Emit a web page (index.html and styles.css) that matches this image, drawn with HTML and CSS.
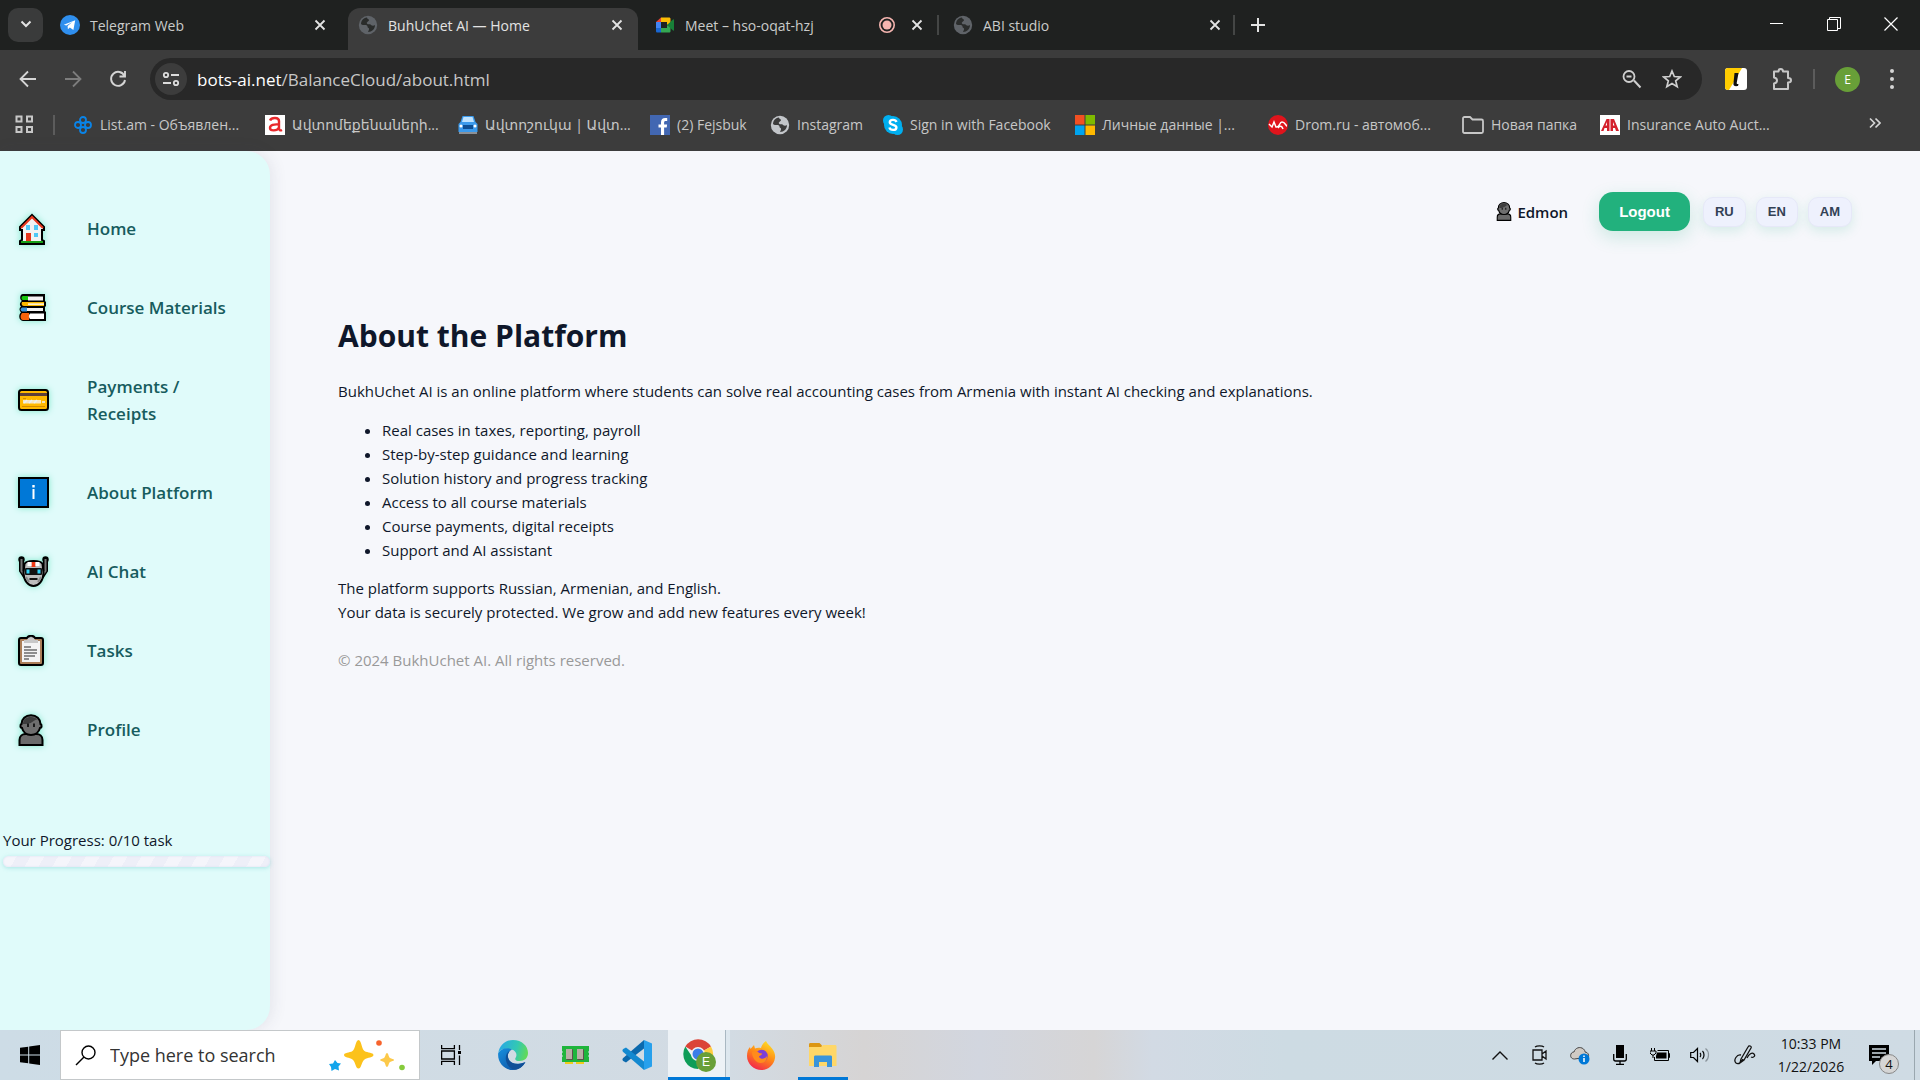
FILE: index.html
```html
<!DOCTYPE html>
<html lang="en">
<head>
  <meta charset="UTF-8">
  <title>BuhUchet AI — Home</title>
  <link rel="stylesheet" href="styles.css">
</head>
<body>
  <!-- shared icons -->
  <svg class="defs" aria-hidden="true">
    <symbol id="close" viewBox="0 0 12 12"><path d="M1.500 1.500l9 9M10.500 1.500l-9 9" stroke="currentColor" stroke-width="1.800" fill="none"/></symbol>
    <symbol id="globe" viewBox="0 0 20 20"><circle cx="10" cy="10" r="9.200" fill="currentColor"/><path d="M9 2.500C5 3 3 6 3 9c2 2 4 0 6 1.500 1 1 0 2 1.500 2.500 1 .5.5 2-.5 4 4 0 7-3 7-7-1 1-3 1-4 0-1-1.500-3 0-4-1.500C8 7 11 6.500 11 5c0-1-2-1-2-2.500z" fill="var(--cut)"/></symbol>
    <symbol id="person" viewBox="0 0 26 32">
      <path d="M1.500 31v-5c0-4 3-6 6-6h11c3 0 6 2 6 6v5z" fill="#6b6b6b" stroke="#000" stroke-width="2"/>
      <path d="M3.500 10c0-5 4-8.800 9.500-8.800S22.500 5 22.500 10c1.500.5 1.500 4-.5 4-1 4-4.500 7-9 7s-8-3-9-7c-2 0-2-3.500-.5-4z" fill="#6f6f6f" stroke="#000" stroke-width="2"/>
      <path d="M5 10C5 5.500 8 3 13 3c3 0 5 1 6.500 2.500C17 6 16.500 6 15 7.500 12 10 8 10 5 10z" fill="#3d3d3d"/>
      <path d="M10 9.500v3.500M16 9.500v3.500" stroke="#111" stroke-width="1.800"/>
    </symbol>
  </svg>

  <!-- tabs -->
  <div class="tab-strip">
    <button class="tab-search" aria-label="Search tabs"><svg width="12" height="12" viewBox="0 0 12 12"><path d="M1.500 3.500L6 8l4.500-4.500" fill="none" stroke="#e3e3e3" stroke-width="2"/></svg></button>
    <div class="tab">
      <svg width="20" height="20" viewBox="0 0 20 20"><circle cx="10" cy="10" r="10" fill="#2f8fee"/><path d="M3.800 9.800L15.200 5.200l-1.800 9.800-3.600-2.500-1.900 1.800-.3-3.200 4.700-4-6 3.500z" fill="#fff"/></svg>
      <span class="tab-title">Telegram Web</span>
      <button class="tab-close" aria-label="Close"><svg width="12" height="12"><use href="#close"/></svg></button>
    </div>
    <div class="tab active">
      <svg class="globe dim" width="20" height="20"><use href="#globe"/></svg>
      <span class="tab-title">BuhUchet AI — Home</span>
      <button class="tab-close" aria-label="Close"><svg width="12" height="12"><use href="#close"/></svg></button>
    </div>
    <div class="tab">
      <svg width="20" height="20" viewBox="0 0 20 20"><path d="M1 7l5-4.500V7z" fill="#ea4335"/><path d="M6 2.500h8c1 0 1.500.5 1.500 1.500v4L12 10V7H6z" fill="#fbbc04"/><path d="M1 7h5v6H1z" fill="#4285f4"/><path d="M1 13h5v4.500H2.500C1.500 17.500 1 17 1 16z" fill="#1967d2"/><path d="M6 13h6v-3l3.500 2v4c0 1-.5 1.500-1.500 1.500H6z" fill="#34a853"/><path d="M12 10l6-5.500c.5-.5 1-.2 1 .5v10c0 .7-.5 1-1 .5z" fill="#188038"/></svg>
      <span class="tab-title">Meet – hso-oqat-hzj</span>
      <svg class="rec" width="18" height="18" viewBox="0 0 18 18"><circle cx="9" cy="9" r="7.200" fill="none" stroke="#f5b5b0" stroke-width="1.600"/><circle cx="9" cy="9" r="4.500" fill="#f5b5b0"/></svg>
      <button class="tab-close" aria-label="Close"><svg width="12" height="12"><use href="#close"/></svg></button>
    </div>
    <div class="tab split">
      <svg class="globe dim" width="20" height="20"><use href="#globe"/></svg>
      <span class="tab-title">ABI studio</span>
      <button class="tab-close" aria-label="Close"><svg width="12" height="12"><use href="#close"/></svg></button>
    </div>
    <button class="new-tab" aria-label="New tab"><svg width="14" height="14" viewBox="0 0 14 14"><path d="M7 0v14M0 7h14" stroke="#e3e3e3" stroke-width="2"/></svg></button>
    <div class="window-buttons">
      <button aria-label="Minimize"><svg width="14" height="14" viewBox="0 0 14 14"><path d="M0 6.500h13" stroke="#fff"/></svg></button>
      <button aria-label="Restore"><svg width="14" height="14" viewBox="0 0 14 14"><path d="M.5 2.500h10v11H.5zM2.500 2.500v-2h11v11h-3" fill="none" stroke="#fff"/></svg></button>
      <button aria-label="Close window"><svg width="14" height="14" viewBox="0 0 14 14"><path d="M.5.5l13 13M13.500.5l-13 13" stroke="#fff" stroke-width="1.200"/></svg></button>
    </div>
  </div>

  <!-- address bar -->
  <div class="toolbar">
    <div class="nav-buttons">
      <button aria-label="Back"><svg width="18" height="18" viewBox="0 0 18 18"><path d="M17 9H2M9 1.500L1.500 9 9 16.500" fill="none" stroke="#d5d5d5" stroke-width="1.800"/></svg></button>
      <button aria-label="Forward"><svg width="18" height="18" viewBox="0 0 18 18"><path d="M1 9h15M9 1.500L16.500 9 9 16.500" fill="none" stroke="#7d7d7d" stroke-width="1.800"/></svg></button>
      <button aria-label="Reload"><svg width="18" height="18" viewBox="0 0 18 18"><path d="M15.500 6A7 7 0 1 0 16 10M16 1v5.500h-5.500" fill="none" stroke="#d5d5d5" stroke-width="1.900"/></svg></button>
    </div>
    <div class="address">
      <button class="site-info" aria-label="Site information"><svg width="18" height="16" viewBox="0 0 18 16"><g fill="none" stroke="#dcdcdc" stroke-width="1.800"><circle cx="4" cy="4" r="2.200"/><path d="M9 4h8M1 12h8"/><circle cx="14" cy="12" r="2.200"/></g></svg></button>
      <a class="url" href="#"><b>bots-ai.net</b>/BalanceCloud/about.html</a>
      <button aria-label="Zoom"><svg width="20" height="20" viewBox="0 0 20 20"><path d="M12 11.500l6.500 7M4.500 7.500h5" stroke="#cfcfcf" stroke-width="2"/><circle cx="7" cy="7.500" r="5.500" fill="none" stroke="#cfcfcf" stroke-width="1.800"/></svg></button>
      <button aria-label="Bookmark this page"><svg width="20" height="20" viewBox="0 0 20 20"><path d="M10 2l2.300 5.500 6 .5-4.600 3.900 1.500 5.900L10 14.600l-5.200 3.200 1.500-5.900L1.700 8l6-.5z" fill="none" stroke="#cfcfcf" stroke-width="1.700"/></svg></button>
    </div>
    <div class="extensions">
      <svg width="22" height="22" viewBox="0 0 22 22"><rect width="22" height="22" rx="3" fill="#fff"/><path d="M3 0h14L4 22H3a3 3 0 0 1-3-3V3a3 3 0 0 1 3-3z" fill="#fc0"/><path d="M9.500 5h4l-1.800 10c-.1 1 .5 1 1.800 1l-.5 2c-4 .5-5-.5-4.500-3z" fill="#111"/></svg>
      <svg width="22" height="24" viewBox="0 0 22 24"><path d="M3 4.500h4.500c0-3.500 4.500-3.500 4.500 0h5V11c4 0 4 4.500 0 4.500V22H3v-5.500c4-.5 4-5.500 0-6z" fill="none" stroke="#c7c7c7" stroke-width="2" stroke-linejoin="round"/></svg>
      <i class="divider"></i>
      <span class="avatar">E</span>
      <button aria-label="Menu"><svg width="4" height="20" viewBox="0 0 4 20" fill="#d5d5d5"><circle cx="2" cy="2" r="2"/><circle cx="2" cy="10" r="2"/><circle cx="2" cy="18" r="2"/></svg></button>
    </div>
  </div>

  <!-- bookmarks -->
  <nav class="bookmarks">
    <svg class="apps" width="19" height="19" viewBox="0 0 19 19"><path d="M1.500 1.500h5v5h-5zM12 1.500h5v5h-5zM1.500 12h5v5h-5zM12 12h5v5h-5z" fill="none" stroke="#c7c7c7" stroke-width="2"/></svg>
    <i class="divider"></i>
    <a href="#"><svg width="20" height="20" viewBox="0 0 20 20"><g fill="none" stroke="#0a84e8" stroke-width="1.800"><circle cx="10" cy="5" r="3"/><circle cx="10" cy="15" r="3"/><circle cx="5" cy="10" r="3"/><circle cx="15" cy="10" r="3"/></g></svg>List.am - Объявлен...</a>
    <a href="#"><svg width="20" height="20" viewBox="0 0 20 20"><path d="M0 0h20v20H0z" fill="#fff"/><path d="M5 5.500C6.500 2 14 2 14 6v7c0 2 1 3 3 2M14 9.500C9 9 5 10 5 13s7 3.500 9-.5" fill="none" stroke="#e8282b" stroke-width="2.400"/></svg>Ավտոմեքենաների...</a>
    <a href="#"><svg width="20" height="20" viewBox="0 0 20 20"><path d="M4.500 1h11l2 6 2 2v8H.5V9l2-2z" fill="#3b9aec"/><path d="M5.500 2h9L16 7H4z" fill="#bfe3ff"/><path d="M5 10h10v4H5z" fill="#0e4f94"/><circle cx="3" cy="11" r="1.500" fill="#fff"/><circle cx="17" cy="11" r="1.500" fill="#fff"/><path d="M1 17h18v2H1z" fill="#8b9096"/></svg>Ավտոշուկա | Ավտ...</a>
    <a href="#"><svg width="20" height="20" viewBox="0 0 20 20"><path d="M0 0h20v20H0z" fill="#4267b2"/><path d="M11 20v-7.500H8.500v-3H11V7.300C11 4.500 12.600 3 15.200 3l2 .1v2.800h-1.500c-1.200 0-1.600.6-1.600 1.500v2.100h3l-.4 3h-2.600V20z" fill="#fff"/></svg>(2) Fejsbuk</a>
    <a href="#"><svg class="globe" width="20" height="20"><use href="#globe"/></svg>Instagram</a>
    <a href="#"><svg width="20" height="20" viewBox="0 0 20 20"><circle cx="10" cy="10" r="9" fill="#00aff0"/><circle cx="5.500" cy="5.500" r="5.500" fill="#00aff0"/><circle cx="14.500" cy="14.500" r="5.500" fill="#00aff0"/><path d="M13.500 7C12.500 4 6.800 4.300 6.800 7.200c0 3.300 6.600 2 6.600 5.200 0 3.200-6 3.300-7 .1" fill="none" stroke="#fff" stroke-width="2.400"/></svg>Sign in with Facebook</a>
    <a href="#"><svg width="20" height="20" viewBox="0 0 20 20"><path d="M0 0h9.500v9.500H0z" fill="#f25022"/><path d="M10.500 0H20v9.500h-9.500z" fill="#7fba00"/><path d="M0 10.500h9.500V20H0z" fill="#00a4ef"/><path d="M10.500 10.500H20V20h-9.500z" fill="#ffb900"/></svg>Личные данные |...</a>
    <a href="#"><svg width="20" height="20" viewBox="0 0 20 20"><circle cx="10" cy="10" r="10" fill="#e0141c"/><path d="M1 9l3 3 2-5 2 5c4 1 3-5 6-5s4 4 5 4M10 13c2-3 4-2 5 1" fill="none" stroke="#fff" stroke-width="1.500"/></svg>Drom.ru - автомоб...</a>
    <a href="#"><svg width="22" height="18" viewBox="0 0 22 18"><path d="M1 2.500C1 1.500 1.500 1 2.500 1H8l2.500 2.500h9c1 0 1.500.5 1.500 1.500v10.500c0 1-.5 1.500-1.500 1.500h-17C1.500 17 1 16.500 1 15.500z" fill="none" stroke="#c7c7c7" stroke-width="1.800"/></svg>Новая папка</a>
    <a href="#"><svg width="20" height="20" viewBox="0 0 20 20"><path d="M0 0h20v20H0z" fill="#fff"/><path d="M1 16L6.500 4h3v12H7v-3H4.500L3.500 16zM10.500 4h3.500l5 12h-3l-1-3h-2v3h-2.500z" fill="#d4202c"/><path d="M5.500 10.500L7 7v3.500zM13 7l1.500 3.500H13z" fill="#fff"/></svg>Insurance Auto Auct...</a>
    <button class="more" aria-label="More bookmarks"><svg width="12" height="12" viewBox="0 0 12 12"><path d="M1 1.500L5.500 6 1 10.500M6.500 1.500L11 6l-4.500 4.500" fill="none" stroke="#d5d5d5" stroke-width="1.700"/></svg></button>
  </nav>

  <!-- site -->
  <div class="page">
    <aside class="sidebar">
      <nav class="menu">
        <a href="#"><span class="menu-icon"><svg width="28" height="32" viewBox="0 0 28 32"><path d="M14 2L26 14v3h-2v10l2 1v3H2v-3l2-1V17H2v-3z" fill="#f2f2f2" stroke="#000" stroke-width="2"/><path d="M3 28h22v2H3z" fill="#16a016"/><path d="M3 15L14 4l11 11" fill="none" stroke="#e8361c" stroke-width="2"/><path d="M8 20h5v8H8z" fill="#e8361c"/><path d="M8 12h4v5H8zM16 12h4v5h-4zM16 20h4v4h-4z" fill="#50c8f5"/></svg></span>Home</a>
        <a href="#"><span class="menu-icon"><svg width="29" height="29" viewBox="0 0 29 29"><path d="M5 1h22v7l1 1v4l-1 1v4l1 1v9H5c-4 0-5-6-2-8.500C1 17 1 15 3 13.500 1 12 2 9 4 8 1 6 2 1 5 1z" fill="#000"/><path d="M5 3h5v4H5C3 7 3 3 5 3z" fill="#16c60c"/><path d="M10 3.500h15v4H10z" fill="#f2f2f2"/><path d="M4 9h22v4H6c-2 0-3-2-2-4z" fill="#fbb900"/><path d="M10 10.300h16v1.700H10z" fill="#fff3cf"/><path d="M4 14.500h5v4H4c-2-1-2-3 0-4z" fill="#3a96dd"/><path d="M9 15h16v3H9z" fill="#f2f2f2"/><path d="M4 20h7v7H5c-3 0-3-5-1-7z" fill="#f7630c"/><path d="M12 20.500h14V26H12c-1.500-1.500-1.500-4 0-5.500z" fill="#fff"/></svg></span>Course Materials</a>
        <a href="#"><span class="menu-icon"><svg width="31" height="22" viewBox="0 0 31 22"><rect x="1" y="1" width="29" height="20" rx="2.500" fill="#ffb900" stroke="#000" stroke-width="2"/><path d="M2 4h27v3H2z" fill="#5d3f3a"/><path d="M5 11h18v3.500H5z" fill="#f7e7c3"/><path d="M6 14l3-3M11 14l3-3M16 14l3-3M24 13h3" stroke="#e9f1f6" stroke-width="1.500"/><path d="M4 17.500h23M5 9.500h3" stroke="#d58c00"/></svg></span>Payments / Receipts</a>
        <a href="#"><span class="menu-icon"><svg width="31" height="31" viewBox="0 0 31 31"><path d="M1 1h29v29H1z" fill="#0078d7" stroke="#000" stroke-width="2"/><path d="M14.500 12h2v10h-2zM14.300 8h2.400v2.400h-2.400z" fill="#fff"/></svg></span>About Platform</a>
        <a href="#"><span class="menu-icon"><svg width="31" height="31" viewBox="0 0 31 31"><path d="M3.500 3.500v11l4 6M27.500 3.500v11l-4 6" fill="none" stroke="#000" stroke-width="5"/><circle cx="3.500" cy="3.500" r="3.200" fill="#000"/><circle cx="27.500" cy="3.500" r="3.200" fill="#000"/><path d="M3.500 3v12l3 4M27.500 3v12l-3 4" fill="none" stroke="#767676" stroke-width="2"/><path d="M6.500 8C7.500 5.500 10.500 5 15.500 5s8 .5 9 3l1 9c0 7.500-5 13-10 13s-10-5.500-10-13z" fill="#bdbdbd" stroke="#000" stroke-width="2"/><path d="M13.500 6h4v5h-4z" fill="#f03a17"/><path d="M9.500 6h4v4h-4zM17.500 6h4v4h-4z" fill="#fff"/><rect x="7" y="12" width="17" height="7" rx="1" fill="#111"/><path d="M8.500 13.500h3v4h-3zM19.500 13.500h3v4h-3z" fill="#31d2f7"/><path d="M11.500 23h8" stroke="#111" stroke-width="2"/><path d="M8 21l3 5M23 21l-3 5" stroke="#8a8a8a" stroke-width="2"/></svg></span>AI Chat</a>
        <a href="#"><span class="menu-icon"><svg width="26" height="31" viewBox="0 0 26 31"><rect x="1" y="3" width="24" height="27" rx="2" fill="#ac7f58" stroke="#000" stroke-width="2"/><path d="M4 6h18v21H4z" fill="#f4f4f4"/><path d="M9 3c1-3 7-3 8 0" fill="none" stroke="#000" stroke-width="2"/><path d="M6 8V5h3c1-4 7-4 8 0h3v3z" fill="#c8c8c8"/><path d="M6 12h7M6 15h13M6 18h13M6 21h11M6 24h5" stroke="#6c6c6c" stroke-width="1.300"/></svg></span>Tasks</a>
        <a href="#"><span class="menu-icon"><svg width="26" height="32"><use href="#person"/></svg></span>Profile</a>
      </nav>
      <div class="progress">
        <div class="progress-label" id="progress-label">Your Progress: 0/10 task</div>
        <div class="progress-bar" role="progressbar" aria-labelledby="progress-label" aria-valuenow="0" aria-valuemax="10"></div>
      </div>
    </aside>

    <div class="content">
      <header class="header">
        <span class="user"><svg width="16" height="19" viewBox="0 0 26 32"><use href="#person"/></svg>Edmon</span>
        <button class="logout">Logout</button>
        <div class="langs">
          <button>RU</button>
          <button>EN</button>
          <button>AM</button>
        </div>
      </header>
      <main class="about">
        <h1>About the Platform</h1>
        <p>BukhUchet AI is an online platform where students can solve real accounting cases from Armenia with instant AI checking and explanations.</p>
        <ul>
          <li>Real cases in taxes, reporting, payroll</li>
          <li>Step-by-step guidance and learning</li>
          <li>Solution history and progress tracking</li>
          <li>Access to all course materials</li>
          <li>Course payments, digital receipts</li>
          <li>Support and AI assistant</li>
        </ul>
        <p>The platform supports Russian, Armenian, and English.<br>Your data is securely protected. We grow and add new features every week!</p>
        <p class="copyright">© 2024 BukhUchet AI. All rights reserved.</p>
      </main>
    </div>
  </div>

  <!-- taskbar -->
  <footer class="taskbar">
    <button class="start" aria-label="Start"><svg width="20" height="20" viewBox="0 0 20 20"><path d="M0 2.800l8.200-1.100v7.800H0zM9.200 1.500L20 0v9.500H9.200zM0 10.500h8.200v7.800L0 17.200zM9.200 10.500H20V20L9.200 18.500z" fill="#000"/></svg></button>
    <label class="search">
      <svg width="21" height="21" viewBox="0 0 21 21"><circle cx="13.500" cy="7.500" r="6.500" fill="none" stroke="#000" stroke-width="1.400"/><path d="M9 12L1 20" stroke="#000" stroke-width="1.400"/></svg>
      <input type="text" placeholder="Type here to search" aria-label="Search">
      <svg width="78" height="32" viewBox="0 0 78 32"><path d="M29.500 1c3 0 3 9 6 11s9 1.500 9 4-6 2.500-9 4.500-3 9-6 9-3-7-6-9-8.500-2-8.500-4.500 5.500-2 8.500-4 3-11 6-11z" fill="#fcc21b"/><path d="M58 14c1.500 0 1.500 4 3 5s4 .8 4 2-2.500 1-4 2-1.500 5-3 5-1.500-4-3-5-4-1-4-2 2.500-1 4-2 1.500-5 3-5z" fill="#fcc94a"/><path d="M6 21l2.500 3 3.500.5-2.500 3 .5 4-4-1.500L2.500 32 2 28l-2-3 4-.5z" fill="#12a5ec"/><circle cx="50" cy="4" r="2.800" fill="#f7632c"/><circle cx="73" cy="28.500" r="2.800" fill="#86cb3c"/></svg>
    </label>
    <div class="apps-row">
      <button aria-label="Task View"><svg width="20" height="20" viewBox="0 0 20 20"><path d="M.6 0v3.600h12.800V0M.6 20v-3.600h12.800V20M.6 6h12.800v8H.6zM18.500 0v5M18.500 10.500V20" fill="none" stroke="#000" stroke-width="1.300"/><path d="M17 6h3v3h-3z"/></svg></button>
      <button aria-label="Edge"><svg width="30" height="30" viewBox="0 0 30 30"><defs><linearGradient id="e1" x1="0" y1=".3" x2="1" y2=".5"><stop offset="0" stop-color="#2aa8e6"/><stop offset=".6" stop-color="#32c8b4"/><stop offset="1" stop-color="#62da58"/></linearGradient><linearGradient id="e2" x1="0" y1="0" x2="1" y2="1"><stop offset="0" stop-color="#1790de"/><stop offset="1" stop-color="#0c4a9c"/></linearGradient></defs><path d="M.3 13C1.500 5 7.500 0 15 0c9 0 15 6 15 13 0 5-3.500 8-8.500 8-3.500 0-5-1.500-4-3 2-2.500 1-7.500-4-8.500C8 8 2 9 .3 13z" fill="url(#e1)"/><path d="M.2 13C3 8 10 7 14 9.500c-3 1-4.500 4-4 7.500.8 6 7 9 17.500 5C25 27 20 30 15 30 6 30-.8 22 .2 13z" fill="url(#e2)"/><path d="M14 9.500c-5 2-7 6-6 11 1 5 4.500 8.500 9 9.300 4.500-.8 8-3.300 10-7.300-8 3-15.500 1-17-5-.8-3.500 1-6.500 4-8z" fill="#0f4f97"/></svg></button>
      <button aria-label="Memory"><svg width="27" height="20" viewBox="0 0 27 20"><path d="M0 1h27v5l-1 1 1 1v2l-1 1 1 1v5H0v-5l1-1-1-1V8l1-1-1-1z" fill="#1fb53c"/><path d="M4 4h6v10H4zM15 4h6v10h-6z" fill="#b8aea6"/><path d="M4 14h6V4l1 1v10H5zM15 14h6V4l1 1v10h-6z" fill="#5d534d"/><path d="M3 17h8v2H3zM14 17h8v2h-8z" fill="#f0cc1c"/></svg></button>
      <button aria-label="VS Code"><svg width="30" height="30" viewBox="0 0 30 30"><path d="M22 0l8 3.500v23L22 30z" fill="#27a0ec"/><path d="M22 0v8.500L4 22.500 1.200 21c-1-.8-1-2 0-3z" fill="#0b69ad"/><path d="M22 30v-8.500L4 7.500 1.200 9c-1 .8-1 2 0 3z" fill="#1389d0"/></svg></button>
      <button class="current" aria-label="Chrome"><svg width="32" height="32" viewBox="0 0 32 32"><path d="M15 15L2.300 7.500A15 15 0 0 1 28 7.500z" fill="#db4437"/><path d="M15 15L28 7.500A15 15 0 0 1 15 30l6-11z" fill="#ffcd40"/><path d="M2.300 7.500A15 15 0 0 0 15 30l6-11h-11z" fill="#0f9d58"/><circle cx="15" cy="15" r="7" fill="#f1f1f1"/><circle cx="15" cy="15" r="5.500" fill="#3b7de8"/></svg><span class="avatar small">E</span></button>
      <button aria-label="Firefox"><svg width="29" height="29" viewBox="0 0 29 29"><defs><linearGradient id="f1" x1=".8" y1="0" x2=".3" y2="1"><stop offset="0" stop-color="#ffe226"/><stop offset=".5" stop-color="#ff8a16"/><stop offset="1" stop-color="#f2234e"/></linearGradient></defs><path d="M19 0c1 3 4 4.500 6 7.500 2.500 3.500 3.500 6 3 9.500-1 7-7 12-13.500 12C7 29 0 23 0 15c0-4 1-7 3-9l.5 2L7 4l1 3.500c2-1 4-1 6-.5 1-3 2.500-5.500 5-7z" fill="url(#f1)"/><circle cx="14.500" cy="15" r="6.200" fill="#7d3fd6"/><path d="M5 11c3-2 6-1 7 1l3 .5c0 2-3 2-3 3.500 2 3 6 2 8-1 0 5-3 7-6 7-5 0-9-5-9-11z" fill="#ff8b1c"/></svg></button>
      <button class="running" aria-label="File Explorer"><svg width="28" height="24" viewBox="0 0 28 24"><path d="M0 1.500C0 .5.500 0 1.500 0h9L13 2.500V6H0z" fill="#dc9612"/><path d="M0 4h12l2-2h12c1 0 1.500.5 1.500 1.500V23H0z" fill="#ffd768"/><path d="M5 24V14c0-1 .5-1.500 1.500-1.500h15c1 0 1.500.5 1.500 1.500v10h-5v-5h-8v5z" fill="#3a94db"/></svg></button>
    </div>
    <div class="tray">
      <div class="tray-icons">
        <svg width="16" height="9" viewBox="0 0 16 9"><path d="M.5 8.500L8 1l7.500 7.500" fill="none" stroke="#111" stroke-width="1.400"/></svg>
        <svg width="16" height="20" viewBox="0 0 16 20"><path d="M1 5h9v10H1zM10 9l4-3v8l-4-3M3 2c2-1.500 7-1.500 9 0M3 18c2 1.500 7 1.500 9 0" fill="none" stroke="#111" stroke-width="1.300"/></svg>
        <svg width="20" height="20" viewBox="0 0 20 20"><path d="M4.500 14C1 14 0 11 1 9c.5-1.500 2-2 3-2 1-4 6-6 9.500-3 1 1 1.500 2 1.500 3 3 0 4 3 3.500 5z" fill="#cfcac4" stroke="#444"/><circle cx="14" cy="14" r="5.500" fill="#0078d7"/><path d="M14 13v4M14 10.500V12" stroke="#fff" stroke-width="1.500"/></svg>
        <svg width="14" height="20" viewBox="0 0 14 20"><path d="M3 0h8v13H3z"/><path d="M.7 9v5c0 1.500.6 2 2 2h8.600c1.400 0 2-.5 2-2V9M7 16v3M3 19.400h8" fill="none" stroke="#000" stroke-width="1.300"/></svg>
        <svg width="20" height="14" viewBox="0 0 20 14"><path d="M7 4.500h9.500v6H6V8z"/><path d="M7.500 2.500h11v10H4.500V9M18.500 5.500h1v4h-1M1.500 0v3M4.500 0v3M0 3h6v2L4 7H2L0 5zM3 7v3" fill="none" stroke="#000"/></svg>
        <svg width="21" height="16" viewBox="0 0 21 16"><path d="M.7 5.500h2.800l4-4v13l-4-4H.7zM10 6c1 1 1 3 0 4M12.500 4c2 2 2 6 0 8" fill="none" stroke="#000" stroke-width="1.200"/><path d="M15.500 1.500c4 3 4 10 0 13" fill="none" stroke="#8a949b" stroke-width="1.200"/></svg>
        <svg width="22" height="20" viewBox="0 0 22 20"><path d="M7 14l7-12c1-2 4-1 3 1l-7 12-4 3zM7 10c-4-1-8 5-5 8 3 2 6-2 7-4M13 13c2-4 5-6 7-4s-1 4-3 3" fill="none" stroke="#111" stroke-width="1.300"/></svg>
      </div>
      <div class="clock"><time>10:33 PM</time><time>1/22/2026</time></div>
      <div class="notify"><svg width="20" height="20" viewBox="0 0 20 20"><path d="M0 0h20v16H7l-4 4v-4H0z"/><path d="M3 4h14M3 8h14M3 12h8" stroke="#cfdbe4" stroke-width="1.300"/></svg><span class="badge">4</span></div>
    </div>
  </footer>
</body>
</html>
```
FILE: styles.css
```css
* {
  box-sizing: border-box;
}

body {
  margin: 0;
  height: 100vh;
  display: flex;
  flex-direction: column;
  overflow: hidden;
  font-family: "Open Sans", "Noto Sans", "DejaVu Sans", sans-serif;
  font-size: 15px;
  color: #0f172a;
  background-color: #f6f7fb;
}

button {
  padding: 0;
  border: none;
  background: none;
  cursor: pointer;
}

a {
  color: inherit;
  text-decoration: none;
}

svg {
  flex-shrink: 0;
}

.defs {
  position: absolute;
  width: 0;
  height: 0;
}

.globe {
  color: #c3c6ca;
  --cut: #3c3c3c;
}

.globe.dim {
  color: #5f6368;
  --cut: #2a2c2b;
}

.divider {
  width: 2px;
  height: 20px;
  background-color: #5c5c5c;
}

/* Tab strip */
.tab-strip {
  display: flex;
  align-items: center;
  height: 50px;
  padding-left: 8px;
  background-color: #1f2120;
}

.tab-search {
  width: 35px;
  height: 34px;
  margin-right: 5px;
  border-radius: 10px;
  background-color: #3a3b3b;
}

.tab {
  display: flex;
  align-items: center;
  width: 298px;
  height: 42px;
  margin-top: 8px;
  padding: 0 20px 8px 10px;
  color: #c9cbca;
  font-size: 14px;
}

.tab:first-of-type {
  width: 300px;
  padding-left: 12px;
  padding-right: 22px;
}

.tab.active {
  width: 290px;
  margin-right: 7px;
  padding-right: 15px;
  color: #e3e3e3;
  background-color: #3c3c3c;
  border-radius: 12px 12px 0 0;
}

.tab.split {
  position: relative;
}

.tab.split::before,
.tab.split::after {
  content: "";
  position: absolute;
  left: -6px;
  top: 7px;
  width: 2px;
  height: 20px;
  background-color: #444645;
}

.tab.split::after {
  left: auto;
  right: 6px;
}

.tab-title {
  flex: 1;
  padding-left: 10px;
  white-space: nowrap;
}

.rec {
  margin-right: 15px;
}

.tab-close {
  width: 12px;
  height: 12px;
  line-height: 0;
  color: #e3e3e3;
}

.new-tab {
  width: 34px;
  line-height: 0;
}

.window-buttons {
  display: flex;
  margin-left: auto;
  padding-right: 1px;
}

.window-buttons button {
  width: 57px;
  height: 50px;
}

/* Toolbar */
.toolbar {
  display: flex;
  align-items: center;
  height: 58px;
  background-color: #3c3c3c;
}

.nav-buttons {
  display: flex;
  padding: 0 10px 0 5px;
}

.nav-buttons button {
  width: 45px;
  line-height: 0;
}

.address {
  flex: 1;
  display: flex;
  align-items: center;
  gap: 20px;
  height: 42px;
  padding: 0 20px 0 5px;
  border-radius: 21px;
  background-color: #282828;
}

.address button {
  line-height: 0;
}

.address .site-info {
  width: 32px;
  height: 32px;
  margin-right: -10px;
  border-radius: 50%;
  background-color: #3c3c3c;
}

.url {
  flex: 1;
  font-size: 17px;
  color: #c7c7c7;
}

.url b {
  font-weight: normal;
  color: #fff;
}

.extensions {
  display: flex;
  align-items: center;
  gap: 24px;
  padding: 0 26px 0 23px;
}

.extensions .divider {
  margin: 0 -4px;
}

.extensions button {
  margin-left: 6px;
  line-height: 0;
}

.avatar {
  width: 25px;
  height: 25px;
  border-radius: 50%;
  background-color: #689f38;
  color: #fff;
  font-size: 12px;
  line-height: 25px;
  text-align: center;
}

/* Bookmarks */
.bookmarks {
  display: grid;
  grid-template-columns: 38px 20px 192px 193px 192px 120px 113px 192px 193px 194px 138px 1fr 90px;
  align-items: center;
  height: 43px;
  padding: 0 0 10px 15px;
  color: #c7c7c7;
  background-color: #3c3c3c;
  font-size: 14px;
}

.bookmarks a {
  display: flex;
  align-items: center;
  gap: 7px;
  white-space: nowrap;
}

.more {
  justify-self: center;
}

/* Page */
.page {
  flex: 1;
  display: flex;
  min-height: 0;
}

.sidebar {
  width: 270px;
  padding-top: 38px;
  border-radius: 0 24px 24px 0;
  background-color: #e0fbfa;
  box-shadow: 2px 0 16px rgba(60, 60, 90, 0.1);
}

.menu a {
  display: flex;
  align-items: center;
  padding: 26px 30px 26px 18px;
  font-size: 17px;
  font-weight: 600;
  line-height: 27px;
  color: #175c5e;
}

.menu-icon {
  display: flex;
  flex-shrink: 0;
  width: 69px;
  height: 27px;
  align-items: center;
  filter: drop-shadow(0 0 3px #7fe8cc);
}

.progress {
  padding: 59px 0 0 3px;
}

.progress-label {
  line-height: 24px;
}

.progress-bar {
  height: 11px;
  margin-top: 4px;
  border-radius: 6px;
  background: repeating-linear-gradient(120deg, #f5f5fb 0 12px, #eeeff8 12px 24px);
  box-shadow: 0 1px 4px rgba(90, 200, 200, 0.4), inset 0 0 2px #d9dcf0;
}

.content {
  flex: 1;
  padding: 41px 68px 0 68px;
}

.header {
  display: flex;
  align-items: center;
  justify-content: flex-end;
}

.user {
  display: flex;
  align-items: center;
  gap: 5px;
  margin-right: 31px;
  font-weight: 600;
}

.logout,
.langs button {
  font-family: "Liberation Sans", Arial, sans-serif;
  font-weight: bold;
}

.logout {
  height: 39px;
  padding: 0 20px;
  border-radius: 14px;
  font-size: 15px;
  color: #fff;
  background-color: #22b17d;
  box-shadow: 0 6px 18px rgba(34, 177, 125, 0.2);
}

.langs {
  display: flex;
  gap: 10px;
  margin-left: 13px;
}

.langs button {
  height: 30px;
  padding: 0 11px;
  border: 1px solid #e6e8f8;
  border-radius: 10px;
  font-size: 13px;
  color: #334155;
  background-color: #eef1fd;
  box-shadow: 0 4px 12px rgba(34, 177, 125, 0.15);
}

.about {
  padding-top: 82px;
  line-height: 24px;
}

.about h1 {
  margin: 0 0 20px;
  font-size: 30px;
  line-height: 46px;
}

.about p {
  margin: 0 0 15px;
}

.about ul {
  margin: 0 0 14px;
  padding-left: 44px;
}

.about .copyright {
  margin-top: 24px;
  color: #999;
}

/* Taskbar */
.taskbar {
  display: flex;
  height: 50px;
  color: #111;
  background: linear-gradient(90deg, #cddce6 0, #d2dbe3 38%, #d6d4d4 45%, #d2d6df 51%, #d6d5d6 57%, #d2dae4 60%, #cddbe3 67%, #cfdbe4 100%);
}

.start {
  width: 60px;
  line-height: 0;
}

.search {
  display: flex;
  align-items: center;
  gap: 14px;
  width: 360px;
  padding: 0 12px 0 14px;
  border: 1px solid #c4c8ca;
  background-color: #fff;
}

.search input {
  flex: 1;
  min-width: 0;
  padding: 0;
  border: none;
  outline: none;
  font-family: inherit;
  font-size: 18px;
}

.search input::placeholder {
  color: #333;
}

.apps-row {
  display: flex;
}

.apps-row button {
  display: flex;
  align-items: center;
  justify-content: center;
  position: relative;
  width: 62px;
}

.apps-row .current {
  background: linear-gradient(90deg, #edf2f6 57px, #a9b8c2 57px, #a9b8c2 58px, #dde7ee 58px);
}

.current::after,
.running::after {
  content: "";
  position: absolute;
  left: 0;
  bottom: 0;
  width: 100%;
  height: 3px;
  background-color: #0078d7;
}

.running::after {
  left: 6px;
  width: 50px;
}

.avatar.small {
  position: absolute;
  right: 14px;
  bottom: 8px;
  width: 20px;
  height: 20px;
  line-height: 20px;
}

.tray {
  display: flex;
  align-items: center;
  margin-left: auto;
  margin-right: 5px;
  padding-right: 16px;
  border-right: 1px solid #9aa7af;
}

.tray-icons {
  display: grid;
  grid-template-columns: repeat(6, 40px) 50px;
  align-items: center;
  justify-items: center;
}

.clock {
  display: flex;
  flex-direction: column;
  width: 76px;
  margin: 0 20px 0 3px;
  font-size: 14px;
  line-height: 23px;
  text-align: center;
}

.notify {
  position: relative;
  width: 29px;
  height: 20px;
}

.badge {
  position: absolute;
  left: 10px;
  top: 9px;
  width: 20px;
  height: 20px;
  border: 1px solid #888;
  border-radius: 50%;
  background-color: #d5d5d5;
  font-size: 13px;
  line-height: 18px;
  text-align: center;
}
```
